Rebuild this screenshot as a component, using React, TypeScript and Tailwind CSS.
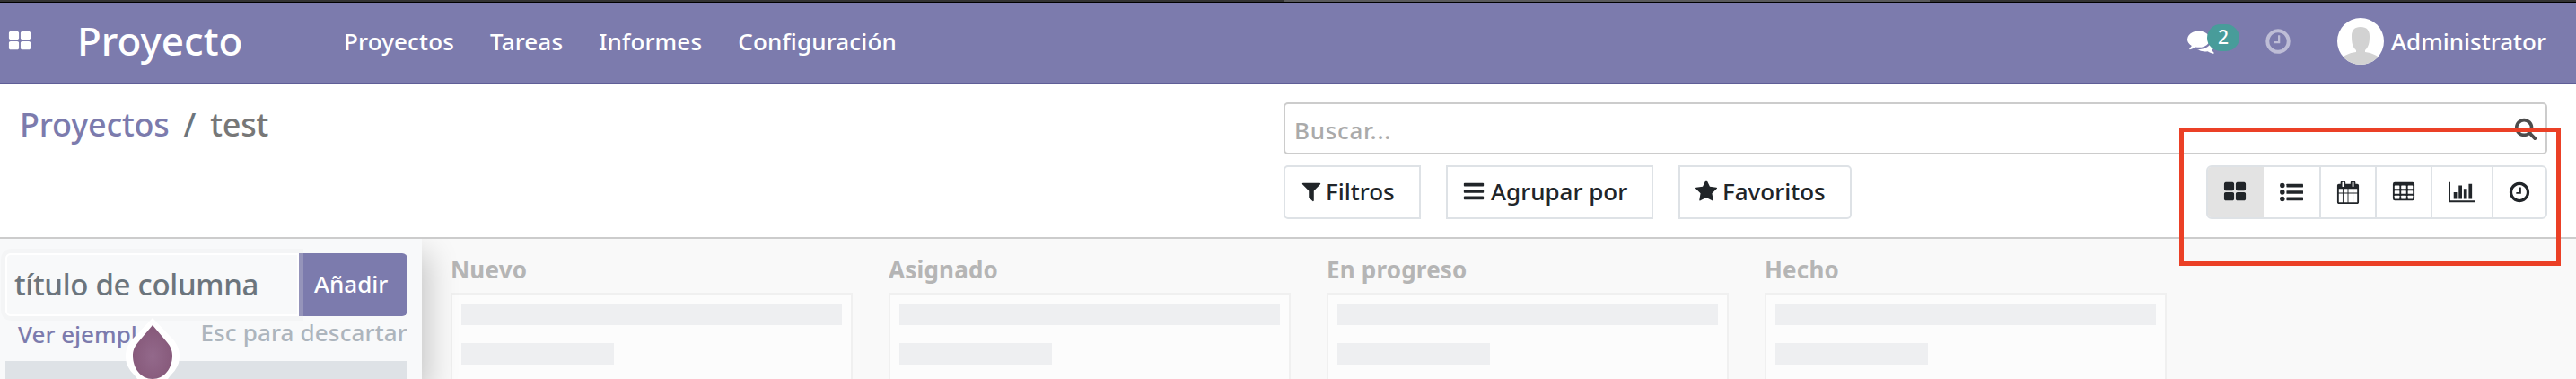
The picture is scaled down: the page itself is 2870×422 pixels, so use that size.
import React from "react";

const TH_LARGE =
  "M832 1024v384q0 52-38 90t-90 38h-512q-52 0-90-38t-38-90v-384q0-52 38-90t90-38h512q52 0 90 38t38 90zm0-768v384q0 52-38 90t-90 38h-512q-52 0-90-38t-38-90v-384q0-52 38-90t90-38h512q52 0 90 38t38 90zm896 768v384q0 52-38 90t-90 38h-512q-52 0-90-38t-38-90v-384q0-52 38-90t90-38h512q52 0 90 38t38 90zm0-768v384q0 52-38 90t-90 38h-512q-52 0-90-38t-38-90v-384q0-52 38-90t90-38h512q52 0 90 38t38 90z";
const FILTER =
  "M1595 295q17 41-14 70l-493 493v742q0 42-39 59-13 5-25 5-27 0-45-19l-256-256q-19-19-19-45v-486l-493-493q-31-29-14-70 17-39 59-39h1280q42 0 59 39z";
const BARS =
  "M1664 1344v128q0 26-19 45t-45 19h-1408q-26 0-45-19t-19-45v-128q0-26 19-45t45-19h1408q26 0 45 19t19 45zm0-512v128q0 26-19 45t-45 19h-1408q-26 0-45-19t-19-45v-128q0-26 19-45t45-19h1408q26 0 45 19t19 45zm0-512v128q0 26-19 45t-45 19h-1408q-26 0-45-19t-19-45v-128q0-26 19-45t45-19h1408q26 0 45 19t19 45z";
const STAR =
  "M1728 647q0 22-26 48l-363 354 86 500q1 7 1 20 0 21-10.5 35.5t-30.5 14.5q-19 0-40-12l-449-236-449 236q-22 12-40 12-21 0-31.5-14.500t-10.500-35.500q0-6 2-20l86-500-364-354q-25-27-25-48 0-37 56-46l502-73 225-455q19-41 49-41t49 41l225 455 502 73q56 9 56 46z";
const CLOCK =
  "M1024 544v448q0 14-9 23t-23 9h-320q-14 0-23-9t-9-23v-64q0-14 9-23t23-9h224v-352q0-14 9-23t23-9h64q14 0 23 9t9 23zm416 352q0-148-73-273t-198-198-273-73-273 73-198 198-73 273 73 273 198 198 273 73 273-73 198-198 73-273zm224 0q0 209-103 385.500t-279.500 279.500-385.500 103-385.500-103-279.500-279.500-103-385.500 103-385.500 279.500-279.500 385.500-103 385.500 103 279.500 279.500 103 385.500z";
const SEARCH =
  "M1216 832q0-185-131.500-316.500t-316.500-131.500-316.500 131.500-131.500 316.500 131.500 316.500 316.500 131.500 316.500-131.500 131.500-316.500zm512 832q0 52-38 90t-90 38q-54 0-90-38l-343-342q-179 124-399 124-143 0-273.500-55.500t-225-150-150-225-55.500-273.500 55.500-273.500 150-225 225-150 273.500-55.500 273.500 55.500 225 150 150 225 55.500 273.500q0 220-124 399l343 343q37 37 37 90z";
const COMMENTS =
  "M1408 768q0 139-94 257t-256.500 186.500-353.500 68.500q-86 0-176-16-124 88-278 128-36 9-86 16h-3q-11 0-20.500-8t-11.500-21q-1-3-1-6.500t.5-6.500 2-6l2.500-5 3.500-5.500 4-5 4.500-5 4-4.500q5-6 23-25t26-29.500 22.500-29 25-38.500 20.500-44q-124-72-195-177t-71-224q0-139 94-257t256.500-186.500 353.500-68.500 353.500 68.500 256.500 186.500 94 257zm384 256q0 120-71 224.500t-195 176.500q10 24 20.500 44t25 38.500 22.500 29 26 29.500 23 25q1 1 4 4.500t4.500 5 4 5 3.500 5.500l2.500 5 2 6 .5 6.500-1 6.500q-3 14-13 22t-22 7q-50-7-86-16-154-40-278-128-90 16-176 16-271 0-472-132 58 4 88 4 161 0 309-45t264-129q125-92 192-212t67-254q0-77-23-152 129 71 204 178t75 230z";
const CHART =
  "M640 896v512h-256v-512h256zm384-512v1024h-256v-1024h256zm1024 1152v128h-2048v-1536h128v1408h1920zm-640-896v768h-256v-768h256zm384-384v1152h-256v-1152h256z";
const CALENDAR =
  "M192 1664h288v-288h-288v288zm352 0h320v-288h-320v288zm-352-352h288v-320h-288v320zm352 0h320v-320h-320v320zm-352-384h288v-288h-288v288zm736 736h320v-288h-320v288zm-384-736h320v-288h-320v288zm768 736h288v-288h-288v288zm-384-352h320v-320h-320v320zm-352-864v-288q0-13-9.500-22.500t-22.500-9.500h-64q-13 0-22.500 9.500t-9.500 22.500v288q0 13 9.500 22.500t22.500 9.500h64q13 0 22.500-9.500t9.500-22.500zm736 864h288v-320h-288v320zm-384-384h320v-288h-320v288zm384 0h288v-288h-288v288zm32-480v-288q0-13-9.500-22.500t-22.500-9.500h-64q-13 0-22.500 9.500t-9.500 22.500v288q0 13 9.500 22.500t22.500 9.500h64q13 0 22.500-9.500t9.500-22.500zm384-64v1280q0 52-38 90t-90 38h-1408q-52 0-90-38t-38-90v-1280q0-52 38-90t90-38h128v-96q0-66 47-113t113-47h64q66 0 113 47t47 113v96h384v-96q0-66 47-113t113-47h64q66 0 113 47t47 113v96h128q52 0 90 38t38 90z";

function Glyph({ d, className, box = "0 0 1792 1792" }: { d: string; className: string; box?: string }) {
  return (
    <svg viewBox={box} className={`block shrink-0 overflow-visible ${className}`} fill="currentColor" fillRule="evenodd" aria-hidden="true">
      <path d={d} />
    </svg>
  );
}

function ListIcon() {
  return (
    <svg viewBox="0 0 1792 1792" className="block size-[26px] shrink-0" fill="currentColor" aria-hidden="true">
      {[384, 896, 1408].map((y) => (
        <g key={y}>
          <circle cx="192" cy={y} r="192" />
          <rect x="512" y={y - 128} width="1280" height="256" rx="32" />
        </g>
      ))}
    </svg>
  );
}

function TableIcon() {
  return (
    <svg viewBox="0 0 1792 1792" className="block size-[26px] shrink-0" aria-hidden="true">
      <rect x="64" y="128" width="1664" height="1408" rx="150" fill="currentColor" />
      {[384, 768, 1152].map((y) =>
        [192, 704, 1216].map((x) => <rect key={`${x}-${y}`} x={x} y={y} width="384" height="256" rx="32" fill="white" />)
      )}
    </svg>
  );
}

const menu = ["Proyectos", "Tareas", "Informes", "Configuración"];

function Navbar() {
  return (
    <header className="flex h-[94px] w-full shrink-0 flex-col">
      <div className="h-[2px] bg-[#333333] pl-[1430px]">
        <div className="h-[2px] w-[720px] bg-[#5a5a5c]" />
      </div>
      <div className="h-[1px] bg-black" />
      <div className="flex h-[91px] items-center border-b-2 border-[#5f5e97] bg-[#7c7bad] pb-[3px] pl-[9px] pr-[32px] text-[26px] text-white">
        <Glyph d={TH_LARGE} className="size-[26px]" />
        <span className="ml-[50px] w-[293px] pb-[2px] pl-[1px] text-[44px] leading-[60px]">Proyecto</span>
        <nav className="flex gap-[40px] pl-[5px] tracking-[0.15px]">
          {menu.map((m) => (
            <span key={m} className="whitespace-nowrap">{m}</span>
          ))}
        </nav>
        <div className="ml-auto flex items-center">
          <div className="relative mr-[53px] h-[32px] w-[32px]">
            <Glyph d={COMMENTS} className="size-[32px]" />
            <span className="absolute -top-[3px] left-[22px] flex h-[30px] w-[36px] items-center justify-center rounded-[15px] bg-[#489c9a] pb-[3px] text-[21px] leading-[30px]">2</span>
          </div>
          <Glyph d={CLOCK} className="mr-[50px] size-[32px] text-white/50" />
          <svg viewBox="0 0 52 52" className="mr-[8px] block size-[52px]" aria-hidden="true">
            <clipPath id="avatar">
              <circle cx="26" cy="26" r="26" />
            </clipPath>
            <g clipPath="url(#avatar)">
              <rect width="52" height="52" fill="white" />
              <path d="M26 10c7 0 10 4 10 10 0 8-1 12-5 16v2c8 1 14 4 18 8v8H3v-8c4-4 10-7 18-8v-2c-4-4-5-8-5-16 0-6 3-10 10-10z" fill="#d2d2d2" />
            </g>
          </svg>
          <span className="w-[174px]">Administrator</span>
        </div>
      </div>
    </header>
  );
}

function Controls() {
  return (
    <section className="flex h-[172px] w-full shrink-0 border-b-2 border-[#cccccc] bg-white pr-[32px]">
      <div className="flex w-[1430px] gap-[16px] pl-[22px] pt-[20px] text-[36px] leading-[50px] tracking-[-0.2px]">
        <span className="text-[#7c7bad]">Proyectos</span>
        <span className="text-[#6c757d]">/</span>
        <span className="text-[#777777]">test</span>
      </div>
      <div className="flex flex-1 flex-col pt-[20px] text-[26px] text-[#212529]">
        <div className="flex h-[58px] items-center justify-between rounded-[5px] border-2 border-[#cccccc] pl-[10px] pr-[9px]">
          <span className="pt-[4px] tracking-[0.7px] text-[#aaaaaa]">Buscar...</span>
          <Glyph d={SEARCH} className="size-[26px] text-[#4c4c4c]" />
        </div>
        <div className="mt-[12px] flex h-[60px]">
          <div className="flex w-[153px] items-center rounded-l-[5px] border-2 border-[#dee2e6] pb-[2px] pl-[16px]">
            <Glyph d={FILTER} className="mr-[3px] size-[26px]" />
            Filtros
          </div>
          <div className="ml-[28px] flex w-[231px] items-center border-2 border-[#dee2e6] pb-[2px] pl-[16px]">
            <Glyph d={BARS} className="mr-[6px] size-[26px]" />
            Agrupar por
          </div>
          <div className="ml-[28px] flex w-[193px] items-center rounded-r-[5px] border-2 border-[#dee2e6] pb-[2px] pl-[16px]">
            <Glyph d={STAR} className="mr-[5px] size-[26px]" />
            Favoritos
          </div>
          <div className="ml-auto flex w-[380px] overflow-hidden rounded-[6px] border-2 border-[#dee2e6]">
            <div className="-m-[2px] mr-0 flex w-[64px] items-center justify-center rounded-l-[6px] border-2 border-r-0 border-[#dcdcdc] bg-[#e3e3e3] pr-[2px]">
              <Glyph d={TH_LARGE} className="size-[26px]" />
            </div>
            <div className="flex w-[64px] items-center justify-center border-r-2 border-[#dee2e6] pr-[1px]">
              <ListIcon />
            </div>
            <div className="flex w-[62px] items-center justify-center border-r-2 border-[#dee2e6] pr-[1px]">
              <Glyph d={CALENDAR} className="size-[26px]" />
            </div>
            <div className="flex w-[62px] items-center justify-center border-r-2 border-[#dee2e6]">
              <TableIcon />
            </div>
            <div className="flex w-[68px] items-center justify-center border-r-2 border-[#dee2e6]">
              <Glyph d={CHART} box="0 0 2048 1792" className="h-[26px] w-[30px]" />
            </div>
            <div className="flex w-[58px] items-center justify-center">
              <Glyph d={CLOCK} className="size-[26px]" />
            </div>
          </div>
        </div>
      </div>
    </section>
  );
}

function NewColumn() {
  return (
    <div className="relative h-[156px] w-[470px] shrink-0 bg-[#f8f9fa] pl-[6px] pt-[16px] text-[26px] shadow-[8px_16px_32px_rgba(0,0,0,0.2)]">
      <div className="flex h-[70px] w-[448px]">
        <div className="flex w-[327px] items-center rounded-l-[6px] border-2 border-white pl-[8px] text-[33px] tracking-[-0.3px] text-[#6c757d] shadow-[0_0_0_5px_rgba(0,0,0,0.015)]">
          título de columna
        </div>
        <div className="flex w-[121px] items-center rounded-r-[6px] border-l-[5px] border-[#9594ba] bg-[#7c7bad] pb-[2px] pl-[12px] text-white">Añadir</div>
      </div>
      <div className="flex h-[50px] w-[448px] justify-between pl-[14px] leading-[36px]">
        <span className="pt-[2px] text-[#7c7bad]">Ver ejemplos</span>
        <span className="tracking-[0.15px] text-[#adb5bd]">Esc para descartar</span>
      </div>
      <div className="h-[20px] w-[448px] bg-[#dee2e6]" />
      <svg viewBox="0 0 60 70" className="absolute left-[140px] top-[86px] h-[70px] w-[60px]" aria-hidden="true">
        <defs>
          <radialGradient id="drop" cx="0.5" cy="0.58" r="0.5">
            <stop offset="0" stopColor="#93698b" />
            <stop offset="1" stopColor="#875a7b" />
          </radialGradient>
        </defs>
        <path d="M30 2L10 23A28 28 0 0 0 10 66L16 74H44L50 66A28 28 0 0 0 50 23Z" fill="white" />
        <path d="M30 10L14 29C9.500 34 8 39 8 44C8 58 17 70 30 70C43 70 52 58 52 44C52 39 50.500 34 46 29Z" fill="url(#drop)" />
      </svg>
    </div>
  );
}

function GhostColumn({ title }: { title: string }) {
  return (
    <div className="flex h-[156px] w-[448px] shrink-0 flex-col">
      <h2 className="h-[60px] pt-[16px] text-[26px] font-bold leading-[36px] tracking-[0.2px] text-[#b5b5b5]">{title}</h2>
      <div className="flex flex-1 flex-col gap-[20px] border-2 border-b-0 border-[#f0f0f0] bg-[#fcfcfc] px-[10px] pt-[10px]">
        <div className="h-[24px] bg-[#eeeff1]" />
        <div className="h-[24px] w-[170px] bg-[#eeeff1]" />
      </div>
    </div>
  );
}

export default function App() {
  return (
    <div className="relative flex h-[422px] w-[2870px] flex-col overflow-hidden bg-white font-['Noto_Sans',sans-serif] font-medium leading-[36px]">
      <Navbar />
      <Controls />
      <main className="flex h-[156px] gap-[32px] overflow-hidden bg-[#f9f9f9]">
        <NewColumn />
        <div className="flex gap-[40px]">
          {["Nuevo", "Asignado", "En progreso", "Hecho"].map((t) => (
            <GhostColumn key={t} title={t} />
          ))}
        </div>
      </main>
      <div className="absolute left-[2428px] top-[142px] h-[154px] w-[425px] border-[5px] border-[#eb4026]" />
    </div>
  );
}
